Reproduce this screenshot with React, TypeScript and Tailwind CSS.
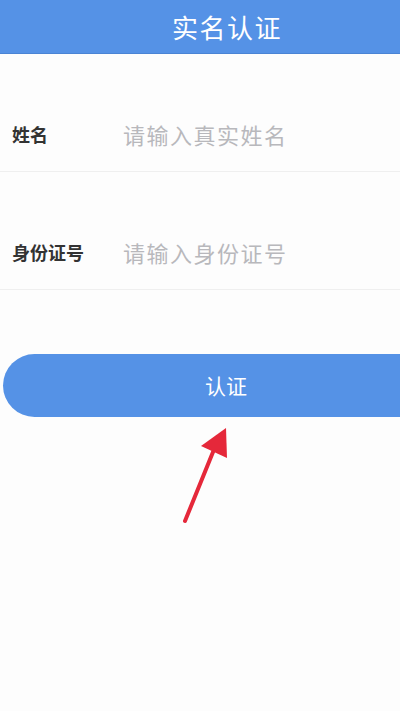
import React from "react";

const font = { fontFamily: '"Noto Sans CJK SC", "Noto Sans", sans-serif' };

function Field({ label, placeholder }: { label: string; placeholder: string }) {
  return (
    <div className="h-[118px] flex items-end pb-[20px] border-b border-[#efefef]">
      <div className="flex items-center w-full">
        <span className="w-[123px] pl-[12px] text-[18px] font-bold text-[#333]">{label}</span>
        <input
          className="flex-1 min-w-0 bg-transparent outline-none text-[22px] tracking-[1.5px] text-[#333] placeholder:text-[#b8b8bc]"
          placeholder={placeholder}
        />
      </div>
    </div>
  );
}

export default function App() {
  return (
    <div className="relative w-[400px] h-[711px] overflow-hidden bg-[#fdfdfd]" style={font}>
      {/* top bar */}
      <div className="h-[54px] bg-[#5592e6] flex items-center justify-center pl-[54px] border-b border-[#4a84d4]">
        <h1 className="text-[26px] text-white tracking-[1.5px]">实名认证</h1>
      </div>

      <Field label="姓名" placeholder="请输入真实姓名" />
      <Field label="身份证号" placeholder="请输入身份证号" />

      <div className="mt-[64px] ml-[3px]">
        <button className="w-[440px] h-[63px] rounded-full bg-[#5592e6] text-white text-[21px] flex items-center pl-[202px]">
          认证
        </button>
      </div>

      {/* red arrow annotation */}
      <svg className="absolute left-0 top-0 pointer-events-none" width="400" height="711">
        <line x1="185" y1="521" x2="213" y2="452" stroke="#e5283a" strokeWidth="4" strokeLinecap="round" />
        <polygon points="226,428 201,446 227,458" fill="#e5283a" />
      </svg>
    </div>
  );
}
